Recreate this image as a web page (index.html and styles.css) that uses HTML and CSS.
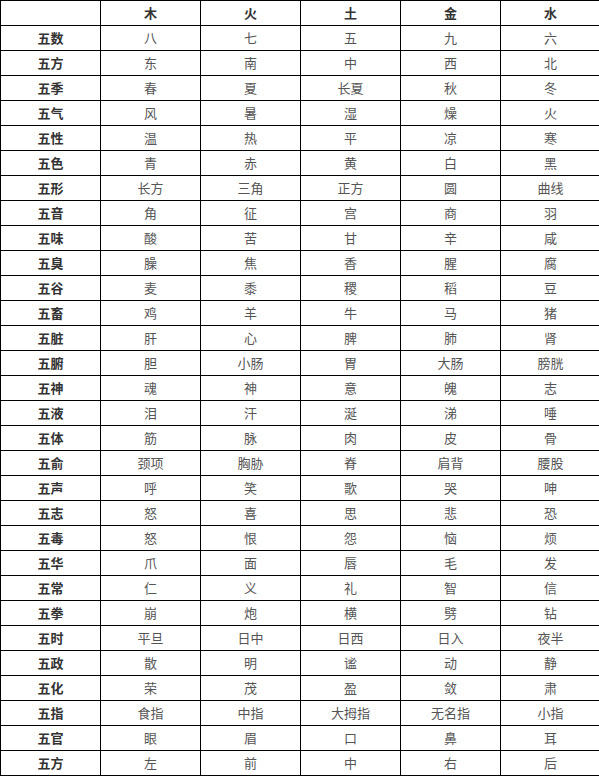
FILE: index.html
```html
<!DOCTYPE html>
<html lang="zh">
<head>
<meta charset="utf-8">
<link rel="stylesheet" href="styles.css">
</head>
<body>
<table class="wx">
<thead>
<tr><th></th><th>木</th><th>火</th><th>土</th><th>金</th><th>水</th></tr>
</thead>
<tbody>
<tr><th>五数</th><td>八</td><td>七</td><td>五</td><td>九</td><td>六</td></tr>
<tr><th>五方</th><td>东</td><td>南</td><td>中</td><td>西</td><td>北</td></tr>
<tr><th>五季</th><td>春</td><td>夏</td><td>长夏</td><td>秋</td><td>冬</td></tr>
<tr><th>五气</th><td>风</td><td>暑</td><td>湿</td><td>燥</td><td>火</td></tr>
<tr><th>五性</th><td>温</td><td>热</td><td>平</td><td>凉</td><td>寒</td></tr>
<tr><th>五色</th><td>青</td><td>赤</td><td>黄</td><td>白</td><td>黑</td></tr>
<tr><th>五形</th><td>长方</td><td>三角</td><td>正方</td><td>圆</td><td>曲线</td></tr>
<tr><th>五音</th><td>角</td><td>征</td><td>宫</td><td>商</td><td>羽</td></tr>
<tr><th>五味</th><td>酸</td><td>苦</td><td>甘</td><td>辛</td><td>咸</td></tr>
<tr><th>五臭</th><td>臊</td><td>焦</td><td>香</td><td>腥</td><td>腐</td></tr>
<tr><th>五谷</th><td>麦</td><td>黍</td><td>稷</td><td>稻</td><td>豆</td></tr>
<tr><th>五畜</th><td>鸡</td><td>羊</td><td>牛</td><td>马</td><td>猪</td></tr>
<tr><th>五脏</th><td>肝</td><td>心</td><td>脾</td><td>肺</td><td>肾</td></tr>
<tr><th>五腑</th><td>胆</td><td>小肠</td><td>胃</td><td>大肠</td><td>膀胱</td></tr>
<tr><th>五神</th><td>魂</td><td>神</td><td>意</td><td>魄</td><td>志</td></tr>
<tr><th>五液</th><td>泪</td><td>汗</td><td>涎</td><td>涕</td><td>唾</td></tr>
<tr><th>五体</th><td>筋</td><td>脉</td><td>肉</td><td>皮</td><td>骨</td></tr>
<tr><th>五俞</th><td>颈项</td><td>胸胁</td><td>脊</td><td>肩背</td><td>腰股</td></tr>
<tr><th>五声</th><td>呼</td><td>笑</td><td>歌</td><td>哭</td><td>呻</td></tr>
<tr><th>五志</th><td>怒</td><td>喜</td><td>思</td><td>悲</td><td>恐</td></tr>
<tr><th>五毒</th><td>怒</td><td>恨</td><td>怨</td><td>恼</td><td>烦</td></tr>
<tr><th>五华</th><td>爪</td><td>面</td><td>唇</td><td>毛</td><td>发</td></tr>
<tr><th>五常</th><td>仁</td><td>义</td><td>礼</td><td>智</td><td>信</td></tr>
<tr><th>五拳</th><td>崩</td><td>炮</td><td>横</td><td>劈</td><td>钻</td></tr>
<tr><th>五时</th><td>平旦</td><td>日中</td><td>日西</td><td>日入</td><td>夜半</td></tr>
<tr><th>五政</th><td>散</td><td>明</td><td>谧</td><td>动</td><td>静</td></tr>
<tr><th>五化</th><td>荣</td><td>茂</td><td>盈</td><td>敛</td><td>肃</td></tr>
<tr><th>五指</th><td>食指</td><td>中指</td><td>大拇指</td><td>无名指</td><td>小指</td></tr>
<tr><th>五官</th><td>眼</td><td>眉</td><td>口</td><td>鼻</td><td>耳</td></tr>
<tr><th>五方</th><td>左</td><td>前</td><td>中</td><td>右</td><td>后</td></tr>
</tbody>
</table>
</body>
</html>
```
FILE: styles.css
```css
html, body {
  margin: 0;
  padding: 0;
  background: #fff;
}
body {
  font-family: "Noto Sans CJK SC", "Noto Sans", sans-serif;
  font-size: 13px;
  color: #555;
}
.wx {
  border-collapse: collapse;
  table-layout: fixed;
  width: 601px;
}
.wx th,
.wx td {
  width: 99px;
  height: 24px;
  padding: 0;
  border: 1px solid #000;
  text-align: center;
  vertical-align: middle;
  line-height: 24px;
}
.wx th {
  font-weight: bold;
  color: #333;
}
```
